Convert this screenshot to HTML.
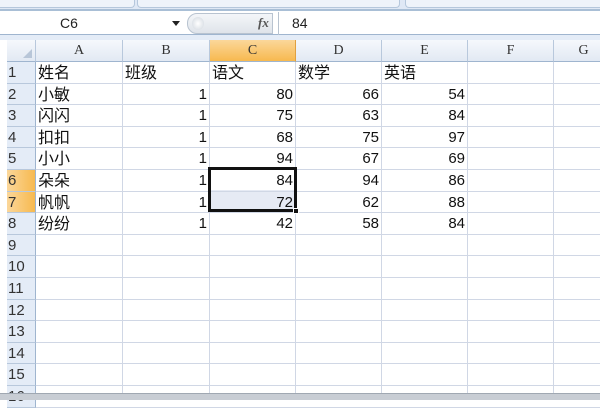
<!DOCTYPE html><html><head><meta charset="utf-8"><style>
*{margin:0;padding:0;box-sizing:border-box}
body{width:600px;height:400px;overflow:hidden;background:#fff;font-family:"Liberation Serif","Noto Serif CJK SC",serif;position:relative}
.top{position:absolute;left:0;top:0;width:600px;height:11px;background:#dfe8f5;border-bottom:2px solid #a9bfd6}
.tab{position:absolute;top:0;height:8px;background:#eef3fa;border:1px solid #b5c7dc;border-top:none;border-radius:0 0 4px 4px}
.fb{position:absolute;left:0;top:12px;width:600px;height:23px;background:#fff;border-bottom:1px solid #9fb5cf}
.gap{position:absolute;left:0;top:35px;width:600px;height:5px;background:#e4ecf7}
.nm{position:absolute;left:60px;top:15px;font:14px "Liberation Sans",sans-serif;color:#222}
.btn{position:absolute;left:187px;top:13px;width:86px;height:21px;border-radius:10px 0 0 10px;background:linear-gradient(#f4f6f9,#dfe4ea);border:1px solid #b8c3d0}
.v{position:absolute;left:292px;top:15px;font:14px "Liberation Sans",sans-serif;color:#222}
.hd{position:absolute;top:40px;height:22px;background:linear-gradient(#f5f8fc,#e2e9f3);border-right:1px solid #b8c8dc;border-bottom:1px solid #9fb5cf;text-align:center;font-size:14px;color:#333;line-height:22px}
.rh{position:absolute;left:7px;width:29px;background:#e4ecf7;border-bottom:1px solid #b8c8dc;border-right:1px solid #9fb5cf;font:15px "Liberation Sans",sans-serif;color:#333;padding-left:1px;line-height:21px}
.c{position:absolute;font-size:16px;color:#111;font-family:"Liberation Sans","Noto Sans CJK SC",sans-serif;line-height:20px}
.n{position:absolute;font-family:"Liberation Sans",sans-serif;font-size:15px;color:#111;text-align:right;line-height:20px}
</style></head><body>
<div class="top"><div class="tab" style="left:-5px;width:140px"></div><div class="tab" style="left:137px;width:263px"></div><div class="tab" style="left:405px;width:200px"></div></div>
<div class="fb"></div>
<div style="position:absolute;left:172px;top:21px;width:0;height:0;border-left:4px solid transparent;border-right:4px solid transparent;border-top:5px solid #222"></div>
<div class="btn"><div style="position:absolute;left:4px;top:3px;width:12px;height:13px;border-radius:50%;background:radial-gradient(#fff,#cfd6de)"></div><span style="position:absolute;left:70px;top:1px;font:italic bold 13px 'Liberation Serif',serif;color:#555">fx</span></div>
<div style="position:absolute;left:278px;top:12px;width:1px;height:23px;background:#b8c3d0"></div>
<div class="nm">C6</div><div class="v">84</div>
<div class="gap"></div>
<div style="position:absolute;left:0;top:40px;width:7px;height:360px;background:#fff"></div>
<svg style="position:absolute;left:0;top:40px" width="600" height="353">
<g stroke="#d0d7e5" stroke-width="1">
<line x1="122.5" y1="22" x2="122.5" y2="353"/><line x1="209.5" y1="22" x2="209.5" y2="353"/><line x1="295.5" y1="22" x2="295.5" y2="353"/><line x1="381.5" y1="22" x2="381.5" y2="353"/><line x1="467.5" y1="22" x2="467.5" y2="353"/><line x1="553.5" y1="22" x2="553.5" y2="353"/>
</g></svg>
<div class="hd" style="left:7px;width:29px"><span style="position:absolute;right:3px;bottom:3px;width:0;height:0;border-left:9px solid transparent;border-bottom:9px solid #b8c6d8"></span></div>
<div class="hd" style="left:36px;width:87px">A</div>
<div class="hd" style="left:123px;width:87px">B</div>
<div class="hd" style="left:210px;width:86px;background:linear-gradient(#fbd79a,#f7b94f);border-right-color:#e0a040">C</div>
<div class="hd" style="left:296px;width:86px">D</div>
<div class="hd" style="left:382px;width:86px">E</div>
<div class="hd" style="left:468px;width:86px">F</div>
<div class="hd" style="left:554px;width:60px">G</div>
<div style="position:absolute;left:210px;top:190px;width:85px;height:21px;background:#e6eaf4"></div>
<div id="rows"></div>
<div style="position:absolute;left:208px;top:167px;width:89px;height:45px;border:3px solid #111"></div>
<div style="position:absolute;left:293px;top:208px;width:6px;height:6px;background:#111;border:1px solid #fff"></div>
<div style="position:absolute;left:0;top:393px;width:600px;height:7px;background:#c8cdd4;border-top:1px solid #a0a8b2"></div>
<script>
var d=[["姓名","班级","语文","数学","英语"],["小敏",1,80,66,54],["闪闪",1,75,63,84],["扣扣",1,68,75,97],["小小",1,94,67,69],["朵朵",1,84,94,86],["帆帆",1,72,62,88],["纷纷",1,42,58,84]];
var xs=[36,123,210,296,382],ws=[86,86,85,85,85],h="";
for(var r=0;r<16;r++){var t=62+r*21.6,hi=(r==5||r==6);
h+='<div class="rh" style="top:'+t+'px;height:21.6px;'+(hi?'background:linear-gradient(90deg,#fbd79a,#f7b94f);':'')+'">'+(r+1)+'</div>';
h+='<div style="position:absolute;left:36px;top:'+(t+20.6)+'px;width:564px;height:1px;background:#d0d7e5"></div>';
if(r<8)for(var c=0;c<5;c++){var v=d[r][c];
if(typeof v=="string")h+='<div class="c" style="left:'+(xs[c]+2)+'px;top:'+(t+2)+'px">'+v+'</div>';
else h+='<div class="n" style="left:'+xs[c]+'px;width:'+(ws[c]-2)+'px;top:'+(t+1)+'px">'+v+'</div>';}}
document.getElementById('rows').innerHTML=h;
</script>
</body></html>
